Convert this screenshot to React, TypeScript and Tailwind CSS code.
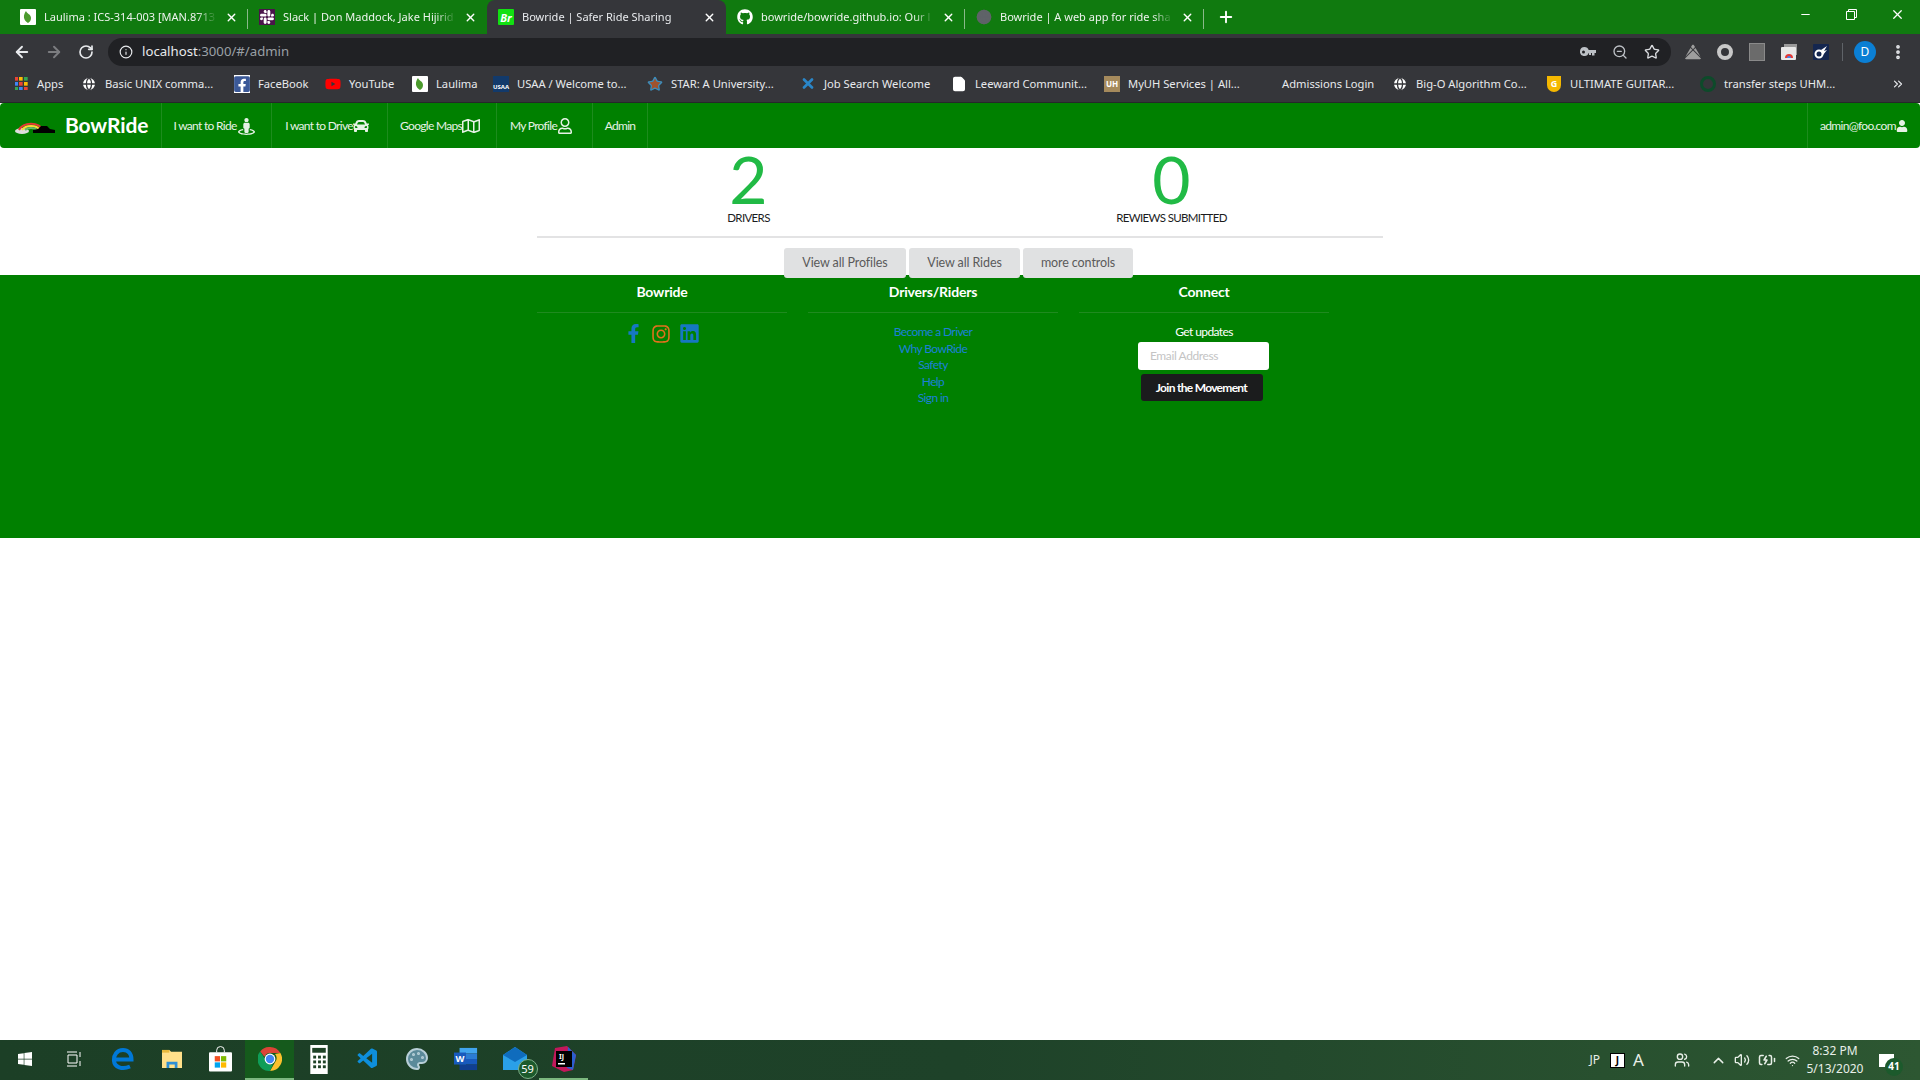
import React from "react";
import { ArrowLeft, ArrowRight, RotateCw, Info, Star, ZoomOut, MoreVertical, Plus, X, Minus, ChevronsRight, ChevronUp, Volume2, BatteryCharging, Wifi, Users, Palette, File, Globe } from "lucide-react";
import { FaGithub, FaSlack, FaWindows, FaStreetView, FaCar, FaRegMap, FaRegUser, FaUser, FaFacebookF, FaInstagram, FaLinkedin, FaFacebookSquare, FaYoutube, FaGooglePlay } from "react-icons/fa";
import { VscVscode } from "react-icons/vsc";

function Leaf() {
  return (
    <svg viewBox="0 0 16 16" className="w-4 h-4 shrink-0">
      <rect width="16" height="16" rx="1" fill="#fff" />
      <path d="M8 14C3 11 3 6 6 2c1 3 5 3 5 7 0 2-1 4-3 5z" fill="#4b9a2d" />
    </svg>
  );
}

function BrIcon() {
  return (
    <div className="w-4 h-4 shrink-0 bg-[#12e012] rounded-[1px] flex items-center justify-center text-white text-[11px] font-bold italic leading-none">Br</div>
  );
}

function Tab({ icon, title, active, sep }: { icon: React.ReactNode; title: string; active?: boolean; sep?: boolean }) {
  return (
    <div className={"relative w-[239px] h-[34px] flex items-center pl-[11px] pr-[10px] gap-2 shrink-0 " + (active ? "bg-[#35363a] rounded-t-lg" : "")}>
      {icon}
      <span className={"flex-1 min-w-0 overflow-hidden whitespace-nowrap text-[11px] [mask-image:linear-gradient(to_right,black_88%,transparent)] " + (active ? "text-[#e8eaed]" : "text-[#eef3ee]")}>{title}</span>
      <X size={13} strokeWidth={2.5} className="text-white shrink-0" />
      {sep && <div className="absolute right-0 top-[9px] h-[20px] w-px bg-[#8ab98a]" />}
    </div>
  );
}

function AppsIcon() {
  const colors = ["#ea4335", "#fbbc05", "#34a853", "#4285f4", "#ea4335", "#fbbc05", "#34a853", "#4285f4", "#ea4335"];
  return (
    <div className="w-[13px] h-[13px] grid grid-cols-3 gap-px">
      {colors.map((c, i) => (
        <svg key={i} viewBox="0 0 3 3" className="w-full h-full">
          <rect width="3" height="3" fill={c} />
        </svg>
      ))}
    </div>
  );
}

const bookmarks = [
  { w: "w-[68px]", icon: <AppsIcon />, label: "Apps" },
  { w: "w-[153px]", icon: <Globe size={16} className="text-[#35363a] fill-white" />, label: "Basic UNIX comma..." },
  { w: "w-[91px]", icon: <FaFacebookSquare size={18} className="text-[#3b5998] bg-white" />, label: "FaceBook" },
  { w: "w-[87px]", icon: <FaYoutube size={16} className="text-[#f00]" />, label: "YouTube" },
  { w: "w-[81px]", icon: <Leaf />, label: "Laulima" },
  { w: "w-[154px]", icon: <div className="w-4 h-4 bg-[#123a6b] text-white text-[6px] font-bold flex items-end justify-center">USAA</div>, label: "USAA / Welcome to..." },
  { w: "w-[153px]", icon: <Star size={16} className="text-[#3c8dbc] fill-[#a0522d]" />, label: "STAR: A University..." },
  { w: "w-[151px]", icon: <X size={17} strokeWidth={4} className="text-[#2a86c8]" />, label: "Job Search Welcome" },
  { w: "w-[153px]", icon: <File size={16} className="text-white fill-white" />, label: "Leeward Communit..." },
  { w: "w-[154px]", icon: <div className="w-4 h-4 bg-[#a58a5c] text-white text-[8px] font-bold flex items-center justify-center">UH</div>, label: "MyUH Services | All..." },
  { w: "w-[134px]", icon: <div className="w-4 h-4" />, label: "Admissions Login" },
  { w: "w-[154px]", icon: <Globe size={16} className="text-[#35363a] fill-white" />, label: "Big-O Algorithm Co..." },
  { w: "w-[154px]", icon: <div className="w-[14px] h-4 bg-[#f5b800] rounded-b-full text-[#fff] text-[9px] font-bold flex items-center justify-center">G</div>, label: "ULTIMATE GUITAR..." },
  { w: "w-[134px]", icon: <div className="w-4 h-4 rounded-full border-[3px] border-[#0d4a2a]" />, label: "transfer steps UHM..." },
];

function NavItem({ label, icon, w }: { label: string; icon?: React.ReactNode; w: string }) {
  return (
    <div className={"h-full flex items-center justify-center pt-px border-r border-[#1d8c1d] text-[12px] tracking-[-0.7px] text-[#e6f2e6] " + w}>
      {label}
      {icon}
    </div>
  );
}

function Stat({ value, label }: { value: string; label: string }) {
  return (
    <div className="flex flex-col items-center pt-px">
      <div className="text-[#21ba45] text-[66px] leading-[60px] h-[60px]">{value}</div>
      <div className="text-[11.5px] leading-[18px] tracking-[-0.65px] text-[#1b1c1d]">{label}</div>
    </div>
  );
}

function FooterCol({ title, children }: { title: string; children: React.ReactNode }) {
  return (
    <div className="w-[250px]">
      <div className="h-[38px] pt-[6px] border-b border-[#1f8a1f] text-center text-white font-bold text-[14px] leading-[22px] tracking-[-0.2px]">{title}</div>
      {children}
    </div>
  );
}

function Calc() {
  return (
    <svg viewBox="0 0 18 30" className="h-[29px] w-[18px]">
      <rect width="18" height="30" fill="#fff" />
      <rect x="2" y="3" width="14" height="5" fill="#1e4226" />
      {[11, 16, 21].map((y) =>
        [3, 8, 13].map((x) => <rect key={x + "-" + y} x={x} y={y} width="3" height="3" fill="#1e4226" />)
      )}
    </svg>
  );
}

function Chrome() {
  return (
    <svg viewBox="0 0 24 24" className="w-6 h-6">
      <path d="M12 0a12 12 0 0 1 10.4 6H12a6 6 0 0 0-5.6 3.8L2.2 4.4A12 12 0 0 1 12 0z" fill="#db4437" />
      <path d="M22.4 6A12 12 0 0 1 12 24l5.2-9A6 6 0 0 0 17 7z" fill="#fbc02d" />
      <path d="M12 24A12 12 0 0 1 2.2 4.4L7 12a6 6 0 0 0 8 5.2z" fill="#0f9d58" />
      <circle cx="12" cy="12" r="5.4" fill="#fff" />
      <circle cx="12" cy="12" r="4.2" fill="#4285f4" />
    </svg>
  );
}

function Edge() {
  return (
    <svg viewBox="0 0 24 24" className="w-6 h-6" fill="none" stroke="#0078d7" strokeWidth="4">
      <path d="M4 12.5h16.5C20.5 6 17 3 12 3 6 3 2.5 8 3 14c.5 6 8 9 16 5.5" />
    </svg>
  );
}

function Explorer() {
  return (
    <svg viewBox="0 0 24 22" className="w-[22px] h-5">
      <path d="M1 1h8l2 2h12v18H1z" fill="#ffe08a" />
      <rect x="1" y="1" width="8" height="3" fill="#e8b93c" />
      <path d="M6 21v-7h12v7h-3v-4H9v4z" fill="#2d8fd5" />
    </svg>
  );
}

function Store() {
  return (
    <svg viewBox="0 0 24 26" className="w-[23px] h-[26px]">
      <path d="M8 6V4a4 4 0 0 1 8 0v2" fill="none" stroke="#fff" strokeWidth="1" />
      <rect y="6" width="24" height="20" rx="1" fill="#fff" />
      <rect x="6" y="10" width="5.5" height="5.5" fill="#f25022" />
      <rect x="12.5" y="10" width="5.5" height="5.5" fill="#7fba00" />
      <rect x="6" y="16.5" width="5.5" height="5.5" fill="#00a4ef" />
      <rect x="12.5" y="16.5" width="5.5" height="5.5" fill="#ffb900" />
    </svg>
  );
}

function Word() {
  return (
    <svg viewBox="0 0 26 26" className="w-6 h-6">
      <rect x="6" y="1" width="19" height="6" fill="#41a5ee" />
      <rect x="6" y="7" width="19" height="6" fill="#2b7cd3" />
      <rect x="6" y="13" width="19" height="6" fill="#185abd" />
      <rect x="6" y="19" width="19" height="6" fill="#103f91" />
      <rect x="0" y="6" width="13" height="13" fill="#185abd" />
      <text x="6.5" y="16" fontSize="10" fontWeight="700" fill="#fff" textAnchor="middle">W</text>
    </svg>
  );
}

function Idea() {
  return (
    <svg viewBox="0 0 24 26" className="w-6 h-[26px]">
      <path d="M3 2l12-2 9 9-3 15-9 2-12-6z" fill="#c2185b" />
      <path d="M16 1l8 8-3 15-6-2z" fill="#2a5fd0" />
      <rect x="4" y="5" width="16" height="16" fill="#000" />
      <text x="7" y="13" fontSize="7" fontWeight="700" fill="#fff">IJ</text>
      <rect x="6" y="17" width="7" height="1.5" fill="#fff" />
    </svg>
  );
}

function Mail() {
  return (
    <svg viewBox="0 0 24 26" className="w-6 h-[26px]">
      <path d="M0 9l12-8 12 8v15H0z" fill="#2aa0e8" />
      <path d="M0 9l12-8 12 8-12 7z" fill="#0f6cbd" />
    </svg>
  );
}

function KeyIcon() {
  return (
    <svg viewBox="0 0 16 10" className="w-4 h-[10px]" fill="#bdc1c6">
      <path fillRule="evenodd" d="M4.5 0a4.5 4.5 0 0 1 4.2 3H16v3h-1.5v2.5H12V6h-1v2H9V6h-.3A4.5 4.5 0 1 1 4.5 0zM3.5 3.5a1.5 1.5 0 1 0 0 3 1.5 1.5 0 0 0 0-3z" />
    </svg>
  );
}

function RestoreIcon() {
  return (
    <svg viewBox="0 0 11 11" className="w-[11px] h-[11px]" fill="none" stroke="#fff" strokeWidth="1">
      <path d="M.5 2.5h8v8h-8zM2.5 2.5v-2h8v8h-2" />
    </svg>
  );
}

function TabsExt() {
  return (
    <svg viewBox="0 0 16 16" className="w-4 h-4">
      <rect x="3" y="0" width="13" height="11" fill="#9a9a9a" />
      <rect x="0" y="3" width="15" height="13" rx="1" fill="#e8e8e8" />
      <path d="M4 14a4 4 0 0 1 8 0z" fill="#e53935" />
      <path d="M6 14a2 2 0 0 1 4 0z" fill="#4285f4" />
    </svg>
  );
}

function CometExt() {
  return (
    <svg viewBox="0 0 16 16" className="w-4 h-4">
      <rect width="16" height="16" rx="1" fill="#14264f" />
      <circle cx="6" cy="10" r="3.5" fill="none" stroke="#fff" strokeWidth="2" />
      <path d="M8 6l6-4-3 5 3-1-4 5z" fill="#fff" />
    </svg>
  );
}

function TaskIcon({ children, active, underline }: { children: React.ReactNode; active?: boolean; underline?: boolean }) {
  return (
    <div className={"w-[49px] h-full flex items-center justify-center border-b-2 " + (active ? "bg-[#155a1c] border-[#7cb87f]" : underline ? "border-[#7cb87f]" : "border-transparent")}>
      {children}
    </div>
  );
}

export default function App() {
  return (
    <div className="h-screen w-full overflow-hidden flex flex-col bg-white font-['Lato',sans-serif]">
      {/* chrome */}
      <div className="h-[34px] bg-[#107a0f] flex items-center pl-[9px] font-['Noto_Sans',sans-serif] shrink-0">
        <Tab icon={<Leaf />} title="Laulima : ICS-314-003 [MAN.8713" sep />
        <Tab icon={<FaSlack size={16} className="text-white bg-[#4a154b] shrink-0" />} title="Slack | Don Maddock, Jake Hijirid" />
        <Tab active icon={<BrIcon />} title="Bowride | Safer Ride Sharing" />
        <Tab icon={<FaGithub size={16} className="text-white shrink-0" />} title="bowride/bowride.github.io: Our l" sep />
        <Tab icon={<Globe size={16} className="text-[#5f6368] fill-[#5f6368] shrink-0" />} title="Bowride | A web app for ride sha" sep />
        <Plus size={18} strokeWidth={2.5} className="text-white ml-[13px]" />
        <div className="ml-auto flex items-center h-full text-white -mt-[6px]">
          <div className="w-[46px] flex justify-center"><Minus size={13} /></div>
          <div className="w-[46px] flex justify-center"><RestoreIcon /></div>
          <div className="w-[46px] flex justify-center"><X size={15} /></div>
        </div>
      </div>

      <div className="h-[32px] bg-[#35363a] flex items-center pt-[4px] pl-[13px] pr-[13px] shrink-0 font-['Noto_Sans',sans-serif]">
        <ArrowLeft size={18} strokeWidth={2.5} className="text-[#e8eaed]" />
        <ArrowRight size={18} strokeWidth={2.5} className="text-[#7c7d80] ml-[14px]" />
        <RotateCw size={16} strokeWidth={2.5} className="text-[#e8eaed] ml-[15px]" />
        <div className="ml-[14px] w-[1563px] h-[28px] bg-[#202124] rounded-full flex items-center pl-[11px] pr-[11px]">
          <Info size={14} className="text-[#e8eaed]" />
          <span className="ml-[9px] text-[13.2px] text-[#e8eaed]">localhost<span className="text-[#9aa0a6]">:3000/#/admin</span></span>
          <div className="ml-auto flex items-center gap-[16px]">
            <KeyIcon />
            <ZoomOut size={16} className="text-[#bdc1c6]" />
            <Star size={16} className="text-[#dadce0]" />
          </div>
        </div>
        <div className="ml-[14px] flex items-center gap-[16px]">
          <FaGooglePlay size={16} className="text-[#9e9e9e] -rotate-90" />
          <div className="w-4 h-4 rounded-full border-[4px] border-[#c8c8c8]" />
          <div className="w-4 h-[18px] bg-[#6b6b6b] border border-[#8a8a8a]" />
          <TabsExt />
          <CometExt />
        </div>
        <div className="ml-[13px] w-px h-[18px] bg-[#5f6368]" />
        <div className="ml-[11px] w-[22px] h-[22px] rounded-full bg-[#0b7fd4] text-white text-[12px] flex items-center justify-center">D</div>
        <MoreVertical size={18} strokeWidth={3} className="text-[#e8eaed] ml-[13px]" />
      </div>

      <div className="h-[37px] bg-[#35363a] border-b border-[#26272a] flex items-center pl-[13px] shrink-0 font-['Noto_Sans',sans-serif] text-[11.2px] text-[#e8eaed]">
        {bookmarks.map((b) => (
          <div key={b.label} className={"flex items-center gap-2 shrink-0 whitespace-nowrap " + b.w}>
            <div className="w-4 h-4 flex items-center justify-center shrink-0">{b.icon}</div>
            <span>{b.label}</span>
          </div>
        ))}
        <ChevronsRight size={14} className="ml-auto mr-[15px]" />
      </div>

      {/* page */}
      <div className="flex-1 min-h-0 flex flex-col">
        <div className="h-[45px] bg-[#008000] rounded-[4px] flex items-center shrink-0">
          <div className="h-full w-[162px] border-r border-[#1d8c1d] flex items-center pl-[14px]">
            <svg viewBox="0 0 42 16" className="w-[42px] h-[16px]">
              <ellipse cx="8" cy="13" rx="7" ry="3" fill="#ddd" />
              <path d="M5 12a13 10 0 0 1 24 0" fill="none" stroke="#e53935" strokeWidth="2" />
              <path d="M8 12a10 7 0 0 1 18 0" fill="none" stroke="#fdd835" strokeWidth="2" />
              <path d="M11 12a7 4 0 0 1 12 0" fill="none" stroke="#66bb6a" strokeWidth="2" />
              <path d="M19 15v-3l5-1 3-3h6l3 3 5 1v3z" fill="#000" />
            </svg>
            <span className="ml-[9px] pb-[2px] text-white font-bold text-[21px] leading-none tracking-[-0.1px]">BowRide</span>
          </div>
          <NavItem w="w-[110px] pr-[5px]" label="I want to Ride" icon={<FaStreetView size={17} className="ml-px" />} />
          <NavItem w="w-[116px] pr-[5px]" label="I want to Drive" icon={<FaCar size={16} />} />
          <NavItem w="w-[109px] pr-[4px]" label="Google Maps" icon={<FaRegMap size={18} />} />
          <NavItem w="w-[96px] pr-[6px]" label="My Profile" icon={<FaRegUser size={16} />} />
          <NavItem w="w-[55px]" label="Admin" />
          <div className="ml-auto h-full w-[113px] border-l border-[#1d8c1d] flex items-center pl-[12px] text-[12px] tracking-[-0.7px] text-[#e6f2e6]">
            admin@foo.com<FaUser size={12} />
          </div>
        </div>

        <div className="h-[127px] shrink-0 relative z-10 flex flex-col items-center">
          <div className="w-[846px] h-[90px] shrink-0 border-b-2 border-[#e3e3e4] grid grid-cols-2">
            <Stat value="2" label="DRIVERS" />
            <Stat value="0" label="REWIEWS SUBMITTED" />
          </div>
          <div className="mt-[10px] mr-[3px] shrink-0 flex gap-[3px] text-[#5a5a5a] text-[12.5px] tracking-[-0.1px]">
            <div className="w-[122px] h-[30px] bg-[#e0e1e2] rounded-[3px] flex items-center justify-center">View all Profiles</div>
            <div className="w-[111px] h-[30px] bg-[#e0e1e2] rounded-[3px] flex items-center justify-center">View all Rides</div>
            <div className="w-[110px] h-[30px] bg-[#e0e1e2] rounded-[3px] flex items-center justify-center">more controls</div>
          </div>
        </div>

        <div className="h-[263px] bg-[#008000] shrink-0 flex pl-[537px] gap-[21px]">
          <FooterCol title="Bowride">
            <div className="mt-[10px] flex items-center justify-center gap-[8px] text-[#1678c2]">
              <FaFacebookF size={19} />
              <FaInstagram size={20} className="text-[#e2711d]" />
              <FaLinkedin size={21} />
            </div>
          </FooterCol>
          <FooterCol title="Drivers/Riders">
            <div className="mt-[11px] flex flex-col items-center text-[#1c80d8] text-[12px] leading-[16.5px] tracking-[-0.6px]">
              <span>Become a Driver</span>
              <span>Why BowRide</span>
              <span>Safety</span>
              <span>Help</span>
              <span>Sign in</span>
            </div>
          </FooterCol>
          <FooterCol title="Connect">
            <div className="mt-[11px] flex flex-col items-center">
              <span className="text-white text-[12px] leading-[16px] tracking-[-0.6px]">Get updates</span>
              <div className="mt-[2px] mr-[1px] w-[131px] h-[28px] bg-white rounded-[3px] flex items-center pl-3 text-[12px] text-[#c4c4c4] tracking-[-0.4px]">Email Address</div>
              <div className="mt-[4px] mr-[5px] w-[122px] h-[27px] bg-[#1b1c1d] rounded-[3px] flex items-center justify-center text-white font-bold text-[12px] tracking-[-0.7px]">Join the Movement</div>
            </div>
          </FooterCol>
        </div>
        <div className="flex-1" />
      </div>

      {/* taskbar */}
      <div className="h-[40px] shrink-0 bg-gradient-to-r from-[#1c3f26] via-[#1e4229] to-[#2d5732] flex items-center font-['Noto_Sans',sans-serif]">
        <div className="flex items-center h-full">
          <TaskIcon><FaWindows size={16} className="text-white" /></TaskIcon>
          <TaskIcon>
            <svg viewBox="0 0 16 16" className="w-4 h-4" fill="none" stroke="#fff" strokeWidth="1">
              <path d="M1 1h10M1 15h10M2 4h9v8H2zM14 1v5M14 10v5" />
            </svg>
          </TaskIcon>
          <TaskIcon><Edge /></TaskIcon>
          <TaskIcon><Explorer /></TaskIcon>
          <TaskIcon><Store /></TaskIcon>
          <TaskIcon active><Chrome /></TaskIcon>
          <TaskIcon><Calc /></TaskIcon>
          <TaskIcon><VscVscode size={24} className="text-[#0e8fdc]" /></TaskIcon>
          <TaskIcon><Palette size={24} className="text-[#b8cfd8] fill-[#5b8a9a]" /></TaskIcon>
          <TaskIcon><Word /></TaskIcon>
          <TaskIcon>
            <div className="relative">
              <Mail />
              <div className="absolute -right-[11px] -bottom-[7px] w-[20px] h-[20px] rounded-full bg-[#1c5a2c] border border-[#7eb088] text-white text-[11px] flex items-center justify-center">59</div>
            </div>
          </TaskIcon>
          <TaskIcon underline><Idea /></TaskIcon>
        </div>
        <div className="ml-auto flex items-center h-full text-white">
          <span className="text-[12px] text-[#e8efe8]">JP</span>
          <div className="ml-[10px] w-[15px] h-[15px] bg-white border border-black flex items-center justify-center text-[10px] font-bold text-black">J</div>
          <span className="ml-[8px] w-[14px] text-[17px] text-[#e8efe8]">A</span>
          <Users size={16} className="ml-[27px] text-[#e8efe8]" />
          <ChevronUp size={17} className="ml-[20px] text-[#e8efe8]" />
          <Volume2 size={16} className="ml-[7px] text-[#e8efe8]" />
          <BatteryCharging size={18} className="ml-[8px] text-[#e8efe8]" />
          <Wifi size={15} className="ml-[9px] text-[#e8efe8]" />
          <div className="ml-[5px] w-[60px] flex flex-col items-center text-[12px] leading-[18px] text-[#e8efe8]">
            <span>8:32 PM</span>
            <span>5/13/2020</span>
          </div>
          <div className="relative ml-[14px] mr-[26px] w-[15px] h-[13px] bg-white">
            <div className="absolute -right-[9px] -bottom-[9px] w-[18px] h-[18px] rounded-full bg-[#1c5a2c] text-white text-[10px] font-bold flex items-center justify-center">41</div>
          </div>
        </div>
      </div>
    </div>
  );
}
